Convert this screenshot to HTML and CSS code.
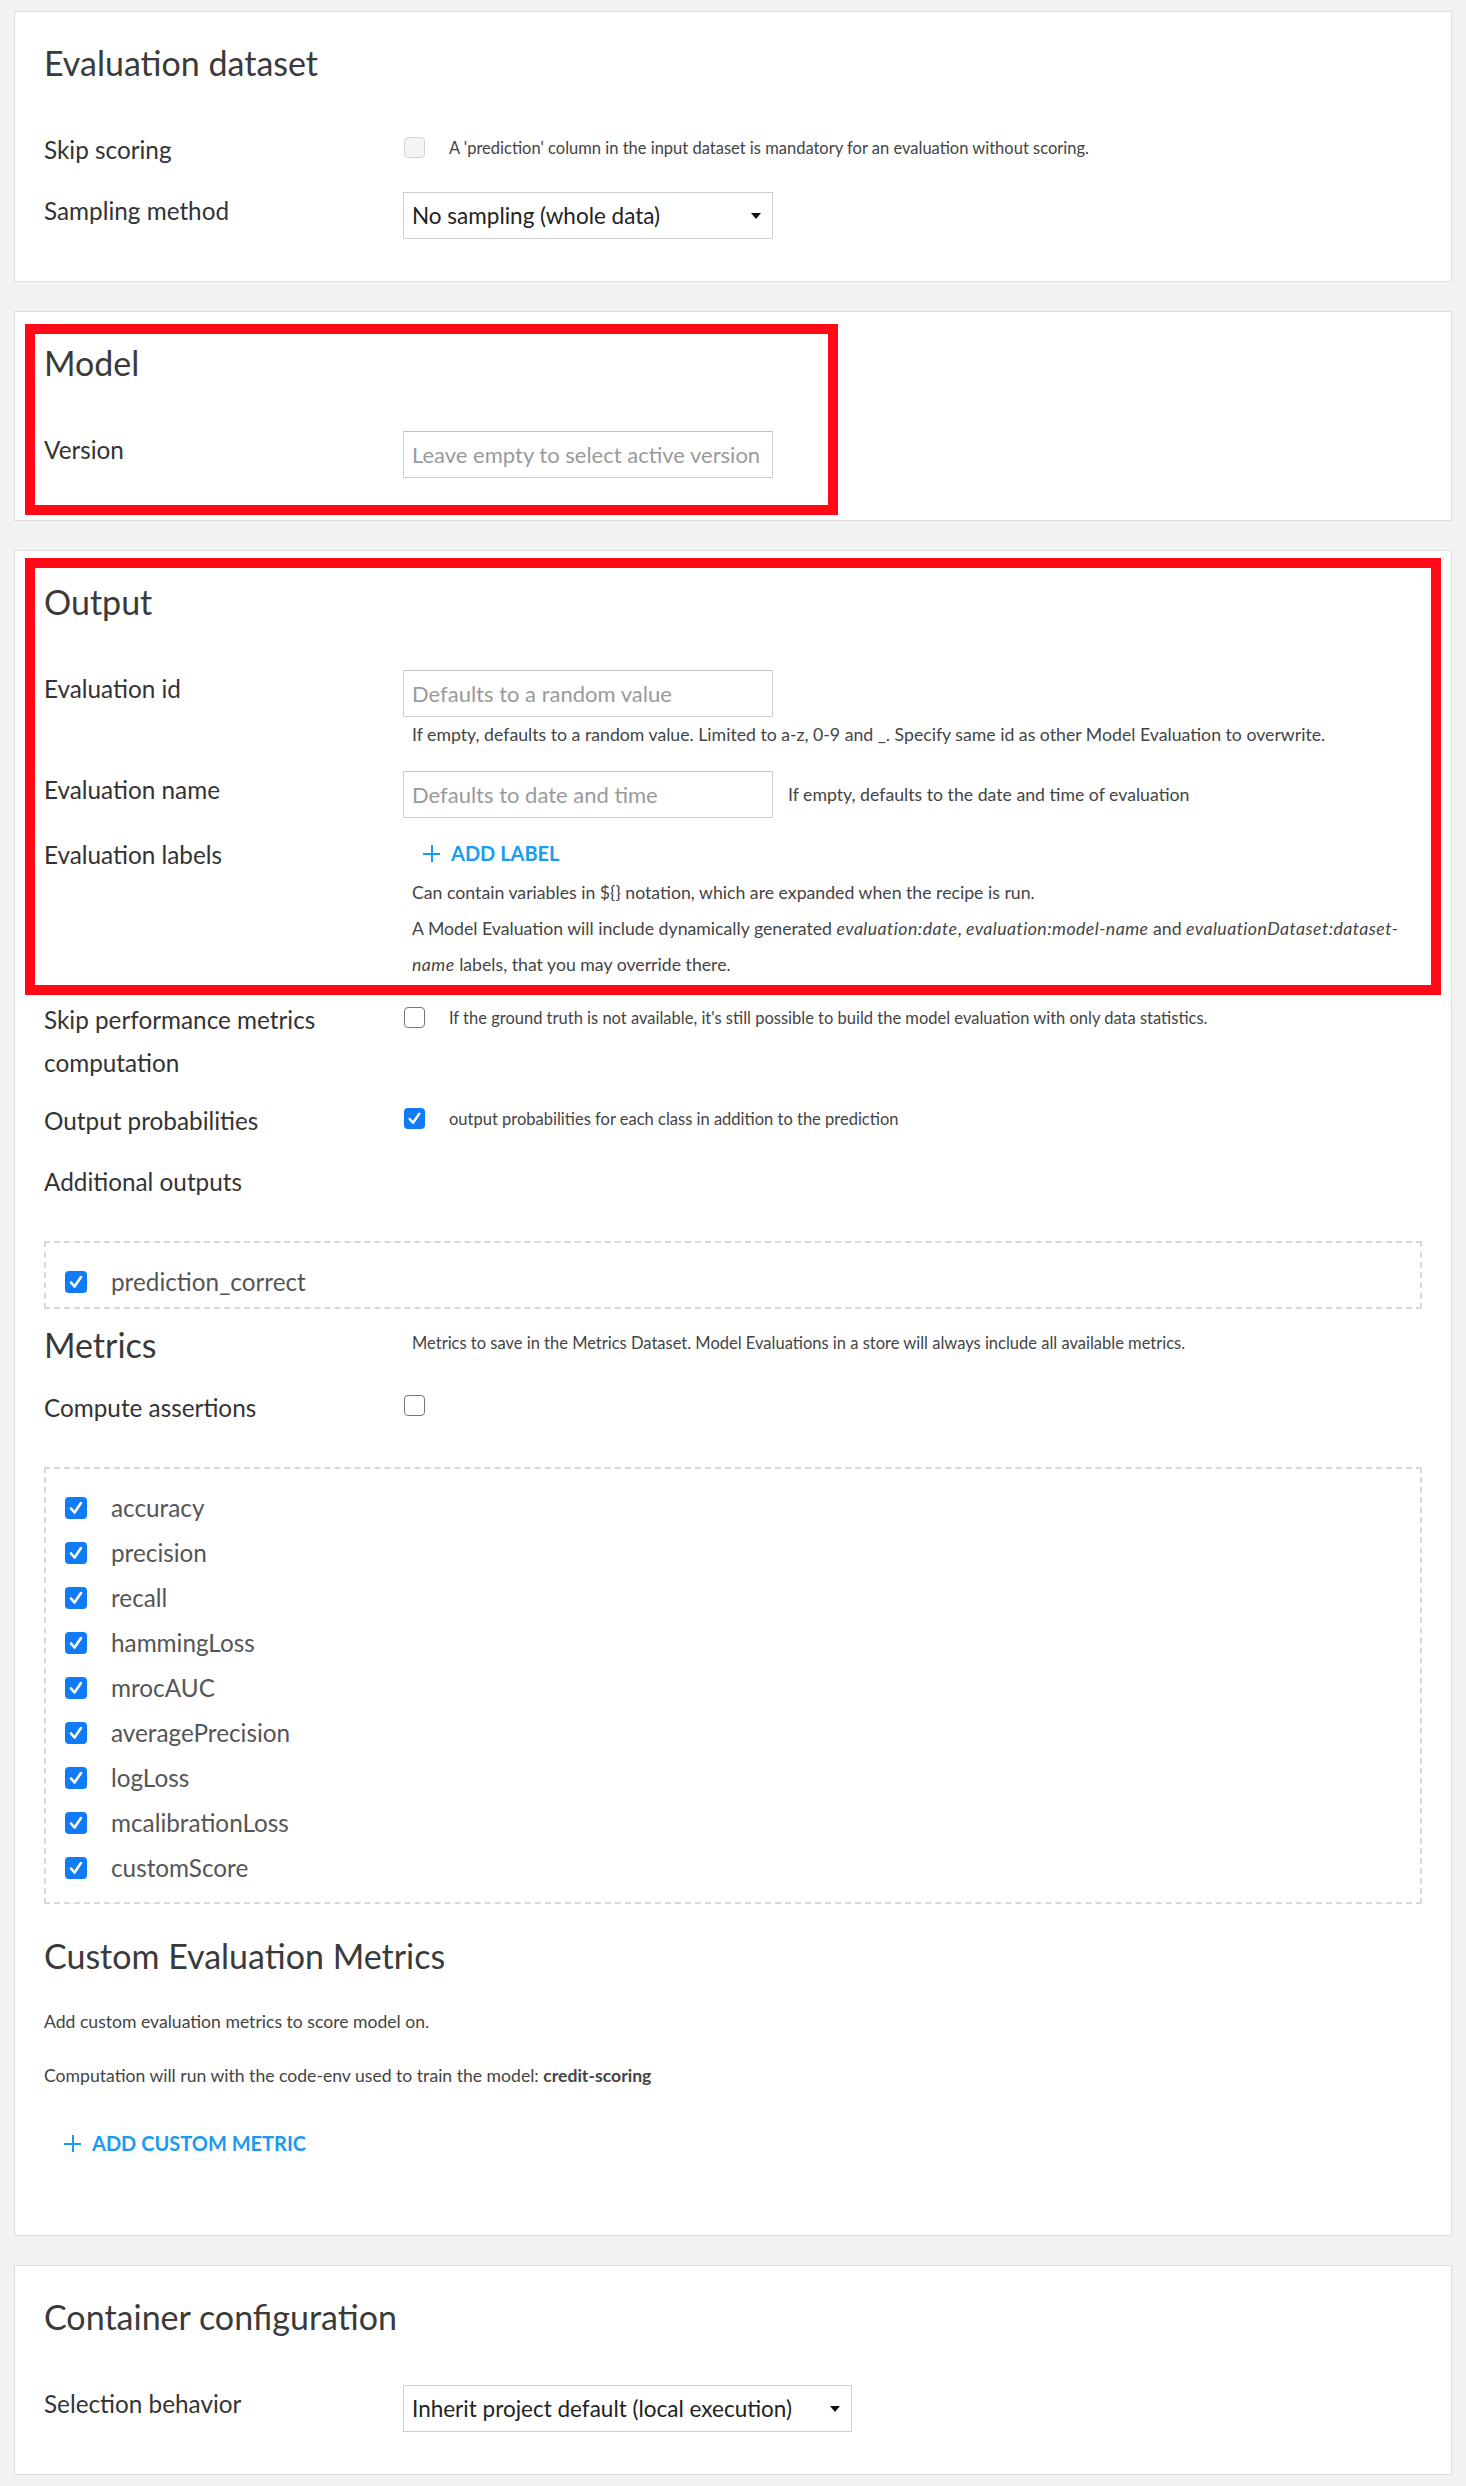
FILE: index.html
```html
<!DOCTYPE html>
<html lang="en">
<head>
    <meta charset="UTF-8">
    <meta name="viewport" content="width=device-width, initial-scale=1.0">
    <title>Evaluate recipe settings</title>
    <link rel="stylesheet" href="styles.css">
</head>
<body>
    <main class="page">

        <section class="card">
            <h2 class="card-title">Evaluation dataset</h2>
            <div class="field">
                <label class="field-label">Skip scoring</label>
                <div class="check-row">
                    <span class="checkbox disabled"></span>
                    <span class="help">A 'prediction' column in the input dataset is mandatory for an evaluation without scoring.</span>
                </div>
            </div>
            <div class="field">
                <label class="field-label">Sampling method</label>
                <div class="select">No sampling (whole data)<span class="caret"></span></div>
            </div>
        </section>

        <section class="card">
            <div class="highlight highlight-model"></div>
            <h2 class="card-title">Model</h2>
            <div class="field">
                <label class="field-label">Version</label>
                <div><input class="text-input" type="text" placeholder="Leave empty to select active version"></div>
            </div>
        </section>

        <section class="card">
            <div class="highlight highlight-output"></div>
            <h2 class="card-title">Output</h2>

            <div class="field">
                <label class="field-label">Evaluation id</label>
                <div>
                    <input class="text-input" type="text" placeholder="Defaults to a random value">
                    <p class="field-help help-block">If empty, defaults to a random value. Limited to a-z, 0-9 and _. Specify same id as other Model Evaluation to overwrite.</p>
                </div>
            </div>

            <div class="field">
                <label class="field-label">Evaluation name</label>
                <div class="inline-row">
                    <input class="text-input" type="text" placeholder="Defaults to date and time">
                    <span class="field-help">If empty, defaults to the date and time of evaluation</span>
                </div>
            </div>

            <div class="field">
                <label class="field-label">Evaluation labels</label>
                <div>
                    <button class="add-btn"><span class="plus"></span>ADD LABEL</button>
                    <p class="field-help help-block">Can contain variables in ${} notation, which are expanded when the recipe is run.</p>
                    <p class="field-help help-block">A Model Evaluation will include dynamically generated <em>evaluation:date</em>, <em>evaluation:model-name</em> and <em>evaluationDataset:dataset-name</em> labels, that you may override there.</p>
                </div>
            </div>

            <div class="field">
                <label class="field-label">Skip performance metrics computation</label>
                <div class="check-row">
                    <span class="checkbox"></span>
                    <span class="help">If the ground truth is not available, it's still possible to build the model evaluation with only data statistics.</span>
                </div>
            </div>

            <div class="field">
                <label class="field-label">Output probabilities</label>
                <div class="check-row">
                    <span class="checkbox checked"></span>
                    <span class="help">output probabilities for each class in addition to the prediction</span>
                </div>
            </div>

            <div class="field">
                <label class="field-label">Additional outputs</label>
            </div>

            <div class="check-list outputs-list">
                <div class="check-item"><span class="checkbox checked"></span>prediction_correct</div>
            </div>

            <div class="metrics-header">
                <h2 class="card-title">Metrics</h2>
                <p class="help help-block">Metrics to save in the Metrics Dataset. Model Evaluations in a store will always include all available metrics.</p>
            </div>

            <div class="field">
                <label class="field-label">Compute assertions</label>
                <div class="check-row">
                    <span class="checkbox"></span>
                </div>
            </div>

            <div class="check-list metrics-list">
                <div class="check-item"><span class="checkbox checked"></span>accuracy</div>
                <div class="check-item"><span class="checkbox checked"></span>precision</div>
                <div class="check-item"><span class="checkbox checked"></span>recall</div>
                <div class="check-item"><span class="checkbox checked"></span>hammingLoss</div>
                <div class="check-item"><span class="checkbox checked"></span>mrocAUC</div>
                <div class="check-item"><span class="checkbox checked"></span>averagePrecision</div>
                <div class="check-item"><span class="checkbox checked"></span>logLoss</div>
                <div class="check-item"><span class="checkbox checked"></span>mcalibrationLoss</div>
                <div class="check-item"><span class="checkbox checked"></span>customScore</div>
            </div>

            <h2 class="card-title custom-title">Custom Evaluation Metrics</h2>
            <p class="note">Add custom evaluation metrics to score model on.</p>
            <p class="note">Computation will run with the code-env used to train the model: <strong>credit-scoring</strong></p>
            <button class="add-btn add-metric"><span class="plus"></span>ADD CUSTOM METRIC</button>
        </section>

        <section class="card">
            <h2 class="card-title">Container configuration</h2>
            <div class="field">
                <label class="field-label">Selection behavior</label>
                <div class="select select-wide">Inherit project default (local execution)<span class="caret"></span></div>
            </div>
        </section>

    </main>
</body>
</html>
```

FILE: styles.css
```css
:root {
    --bg: #f2f2f2;
    --border: #dcdcdc;
    --text: #333;
    --muted: #444;
    --blue: #1a9bf0;
    --check-blue: #0f7bf6;
    --red: #ff0a16;
}

* {
    margin: 0;
    padding: 0;
    box-sizing: border-box;
}

body {
    font-family: Lato, "Liberation Sans", sans-serif;
    background-color: var(--bg);
    color: var(--text);
}

.page {
    display: flex;
    flex-direction: column;
    gap: 29px;
    padding: 11px 14px 14px;
}

.card {
    position: relative;
    background: white;
    border: 1px solid var(--border);
    padding: 31px 29px 42px;
}

.card-title {
    font-size: 34px;
    font-weight: 400;
    line-height: 40px;
    color: #3a3a3a;
    margin-bottom: 48px;
}

/* red annotation frames drawn over the screenshot */
.highlight {
    position: absolute;
    border: 10px solid var(--red);
    pointer-events: none;
}

.highlight-model {
    left: 10px;
    top: 12px;
    width: 813px;
    height: 191px;
}

.highlight-output {
    left: 10px;
    top: 7px;
    width: 1416px;
    height: 437px;
}

.field {
    display: grid;
    grid-template-columns: 359px 1fr;
    align-items: start;
    min-height: 43px;
    margin-bottom: 18px;
}

.card > .field:last-child {
    margin-bottom: 0;
}

.field-label {
    font-size: 24.3px;
    line-height: 43px;
    margin-top: -3px;
    color: var(--text);
    padding-right: 40px;
}

.help {
    font-size: 16.5px;
    color: var(--muted);
}

.field-help {
    font-size: 17.7px;
    color: var(--muted);
}

.field-help em {
    letter-spacing: 0.45px;
}

.help-block {
    line-height: 36px;
    padding-left: 9px;
}

.check-row {
    display: flex;
    align-items: center;
    gap: 24px;
    margin-top: 6px;
}

.inline-row {
    display: flex;
    align-items: center;
    gap: 15px;
}

.checkbox {
    flex: none;
    display: inline-block;
    width: 21px;
    height: 21px;
    border: 1.5px solid #767676;
    border-radius: 4px;
    background: white;
    margin-left: 1px;
}

.checkbox.disabled {
    border-color: #d4d4d4;
    background: #f4f4f4;
}

.checkbox.checked {
    border: none;
    background: var(--check-blue) url("data:image/svg+xml,%3Csvg xmlns='http://www.w3.org/2000/svg' viewBox='0 0 22 22'%3E%3Cpath d='M6 11.5l3.5 4L16 6' fill='none' stroke='white' stroke-width='2.6' stroke-linecap='round' stroke-linejoin='round'/%3E%3C/svg%3E") center / 100% 100% no-repeat;
}

.select {
    width: 370px;
    height: 47px;
    border: 1px solid #cfcfcf;
    padding: 0 11px 0 8px;
    display: flex;
    align-items: center;
    justify-content: space-between;
    font-size: 22.5px;
    color: #222;
}

.select-wide {
    width: 449px;
}

.caret {
    width: 0;
    height: 0;
    border-left: 5px solid transparent;
    border-right: 5px solid transparent;
    border-top: 6px solid #111;
}

.text-input {
    display: block;
    width: 370px;
    height: 47px;
    border: 1px solid #cfcfcf;
    border-top-color: #c4c4c4;
    padding: 0 8px;
    font-family: inherit;
    font-size: 22px;
    color: #222;
    outline: none;
}

.text-input::placeholder {
    color: #9a9a9a;
}

.add-btn {
    display: flex;
    align-items: center;
    gap: 11px;
    background: none;
    border: none;
    padding-left: 20px;
    margin-top: -4px;
    font-family: inherit;
    font-size: 20px;
    font-weight: 700;
    line-height: 43px;
    color: var(--blue);
}

.plus {
    position: relative;
    width: 17px;
    height: 17px;
}

.plus::before,
.plus::after {
    content: "";
    position: absolute;
    background: var(--blue);
}

.plus::before {
    left: 0;
    right: 0;
    top: 7.5px;
    height: 2px;
}

.plus::after {
    top: 0;
    bottom: 0;
    left: 7.5px;
    width: 2px;
}

.check-list {
    border: 2px dashed #d8d8d8;
    padding: 16px 18px 3px;
    margin-top: 35px;
}

.metrics-list {
    padding-bottom: 12px;
}

.check-item {
    display: flex;
    align-items: center;
    gap: 24px;
    height: 45px;
    font-size: 24.3px;
    color: #555;
}

.check-item .checkbox {
    width: 22px;
    height: 22px;
}

.metrics-header {
    display: grid;
    grid-template-columns: 359px 1fr;
    margin-top: 16px;
    margin-bottom: 24px;
}

.metrics-header .card-title {
    margin-bottom: 0;
}

.custom-title {
    margin-top: 32px;
    margin-bottom: 35px;
}

.note {
    font-size: 17.6px;
    line-height: 22px;
    color: var(--muted);
    margin-bottom: 32px;
}

.note strong {
    font-weight: 700;
}

.add-metric {
    margin-top: 35px;
    margin-bottom: 28px;
}
```
